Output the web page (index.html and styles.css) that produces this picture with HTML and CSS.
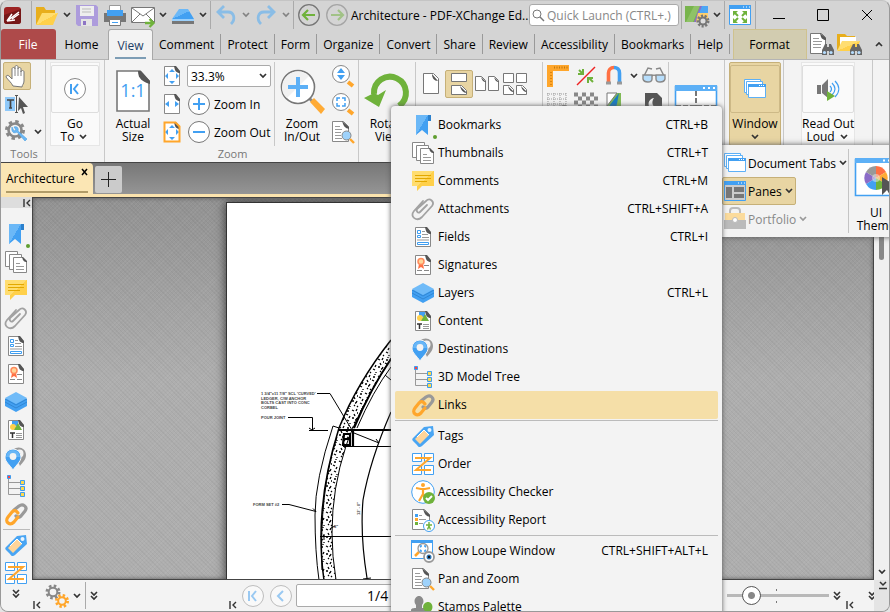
FILE: index.html
```
<!DOCTYPE html>
<html lang="en">
<head>
    <meta charset="UTF-8">
    <meta name="viewport" content="width=device-width, initial-scale=1.0">
    <title>Architecture - PDF-XChange Editor</title>
    <link rel="stylesheet" href="styles.css">
</head>
<body>

<!-- Icon sprite -->
<svg class="sprite" aria-hidden="true">
    <linearGradient id="blue" x1="0" y1="0" x2="1" y2="1">
        <stop offset=".5" stop-color="#6bb8f7"/><stop offset=".5" stop-color="#42a0f2"/>
    </linearGradient>
    <linearGradient id="yellow" x1="0" y1="0" x2="1" y2="1">
        <stop offset=".5" stop-color="#ffdd70"/><stop offset=".5" stop-color="#ffd04a"/>
    </linearGradient>

    <!-- small marks -->
    <symbol id="chev" viewBox="0 0 12 12"><path d="M3 4l3 3 3-3" fill="none" stroke="currentColor" stroke-width="1.700"/></symbol>
    <symbol id="chev2" viewBox="0 0 12 12"><path d="M3 2l3 3 3-3M3 6l3 3 3-3" fill="none" stroke="currentColor" stroke-width="1.600"/></symbol>
    <symbol id="tostart" viewBox="0 0 8 8"><path d="M1 0v8M7 1L4 4l3 3" fill="none" stroke="#333" stroke-width="1.400"/></symbol>

    <!-- documents -->
    <symbol id="doc" viewBox="0 0 24 24"><path d="M4.500 2.500h11l4 5v14h-15z" fill="#fff" stroke="#888"/><path d="M14 2h2l4 5v2c-4 0-5-2-6-7z" fill="#555"/></symbol>
    <symbol id="bookmark" viewBox="0 0 24 24"><path d="M16 2h4v6h-3z" fill="#2b80cc"/><path d="M5 2h12v20l-6-5-6 5z" fill="url(#blue)"/><circle cx="24" cy="24" r="2" fill="#5f9e2f"/></symbol>
    <symbol id="thumbs" viewBox="0 0 24 24"><g fill="#fff" stroke="#888"><path d="M1.500 1.500h12v15h-12z"/><path d="M5.500 4.500h12v15h-12z"/><path d="M9.500 7.500h9l4 4v11h-13z"/></g><path d="M18 7h1l4 4v1c-3 0-4-1-5-5z" fill="#555"/><path d="M12 13.500h4M12 16.500h8M12 19.500h8" stroke="#999"/></symbol>
    <symbol id="comment" viewBox="0 0 24 24"><path d="M1 2h22v15H11l-5 5v-5H1z" fill="url(#yellow)"/><path d="M4 6.500h16M4 9.500h16M4 12.500h12" stroke="#e2a800"/></symbol>
    <symbol id="clip" viewBox="0 0 24 24"><path d="M16 8l-7 7c-2 2-4-1-3-3l9-8c4-4 9 1 6 5L11 20c-5 5-13 0-8-6l9-10" fill="none" stroke="#a2a2a2" stroke-width="1.800" stroke-linecap="round"/></symbol>
    <symbol id="fields" viewBox="0 0 24 24"><use href="#doc"/><path d="M6.500 5.500h3v3h-3zM6.500 10.500h3v2h-3zM6.500 17.500h11v2h-11z" fill="none" stroke="#3d9df0"/><path d="M11 6.500h3M11 9.500h6M11 12.500h7M6 15h12" stroke="#999"/></symbol>
    <symbol id="signature" viewBox="0 0 24 24"><use href="#doc"/><path d="M8 11l-1 5 3-2 3 2-1-5z" fill="#ff7043"/><circle cx="10" cy="8.500" r="3" fill="#ffd699" stroke="#ff8a5c" stroke-width="1.500"/><path d="M13 12.500h5M6 17.500h5M13 17.500h5" stroke="#888"/></symbol>
    <symbol id="layers" viewBox="0 0 24 24"><path d="M1 9l11-6 11 6v7l-11 6-11-6z" fill="#42a0f2"/><path d="M1 8l11-6 11 6-11 6z" fill="#70bbf8"/><path d="M1 12l11 6 11-6M1 9l11 6 11-6" fill="none" stroke="#3187d4"/></symbol>
    <symbol id="content" viewBox="0 0 24 24"><use href="#doc"/><path d="M8 3h6v5H8z" fill="#42a0f2"/><circle cx="9" cy="9" r="3" fill="#ffd04a"/><path d="M10 12l4-7 4 7z" fill="#6fb23b"/><path d="M6 15h5M8.500 15v5" stroke="#333" stroke-width="1.500"/><path d="M12 15.500h6M12 17.500h6M12 19.500h6" stroke="#999"/></symbol>
    <symbol id="pin" viewBox="0 0 24 24"><path d="M9 4c5-5 13-2 13 5 0 5-4 8-6 11z" fill="#999"/><circle cx="15.500" cy="7.500" r="4" fill="#f3f3f3"/><path d="M9 24C6 19 1 16 1 11a8 8 0 0 1 16 0c0 5-5 8-8 13z" fill="#42a0f2" stroke="#f3f3f3"/><path d="M2 11a7 7 0 0 1 14 0z" fill="#68b6f6"/><circle cx="9" cy="10.500" r="3.400" fill="#f3f3f3"/></symbol>
    <symbol id="tree" viewBox="0 0 24 24"><path d="M4.500 5v15.500H17M5 8.500h12M5 14.500h12" fill="none" stroke="#999"/><path d="M3.500 1.500h3v3h-3z" fill="#f44" stroke="#3d9df0"/><path d="M16.500 6.500h4v4h-4zM16.500 12.500h4v4h-4zM16.500 18.500h4v4h-4z" fill="#ffd84a" stroke="#3d9df0"/></symbol>
    <symbol id="link" viewBox="0 0 24 24"><g fill="none" stroke-width="3.200" stroke-linecap="round"><path d="M10 8l5-4c4-3 9 1 6 5l-4 5c-2 2-4 1-5 0" stroke="#999"/><path d="M14 11c-2-3-4-3-6-1l-4 5c-4 5 2 9 6 5l4-5" stroke="#ffa62b"/></g></symbol>
    <symbol id="tag" viewBox="0 0 24 24"><path d="M13 3l9-1 1 9L11 22c-2 2-4 1-5-1l-4-4c-1-1-1-2 0-3z" fill="#49a5f3"/><path d="M13 6l5 5-9 9-5-5z" fill="#ffd59a"/><path d="M6 13l7-7 5 5" fill="none" stroke="#fff"/><circle cx="18.500" cy="6" r="2" fill="#e9f5ff"/></symbol>
    <symbol id="order" viewBox="0 0 24 24"><path d="M1.500 1.500h9v8h-9zM13.500 1.500h9v8h-9zM1.500 13.500h9v9h-9zM13.500 13.500h9v9h-9z" fill="#fff" stroke="#42a0f2"/><path d="M4 6h15L5 18h15" fill="none" stroke="#ffa62b" stroke-width="2"/></symbol>
    <symbol id="a11y" viewBox="0 0 24 24"><circle cx="12" cy="12" r="11.300" fill="#fff" stroke="#42a0f2"/><circle cx="12" cy="5" r="2" fill="#ffa62b"/><path d="M5 8l5 1h4l5-1M12 9v5l-4 7M12 14l4 7" fill="none" stroke="#ffa62b" stroke-width="2.200"/><circle cx="18" cy="18" r="6" fill="#6fb23b"/><path d="M15 18l2 2 4-4" fill="none" stroke="#fff" stroke-width="2"/></symbol>
    <symbol id="report" viewBox="0 0 24 24"><path d="M1.500 1.500h12l5 5v15h-17z" fill="#fff" stroke="#888"/><path d="M12 1l7 6v2c-4-1-5-2-7-8z" fill="#555"/><path d="M8 7.500h3M8 11.500h7M8 15.500h4" stroke="#999"/><path d="M4 6h3v3H4z" fill="#42a0f2"/><path d="M4 10h3v3H4z" fill="#ffa62b"/><path d="M4 14h3v3H4z" fill="#6fb23b"/><circle cx="18" cy="18" r="5.500" fill="#fff" stroke="#42a0f2"/><path d="M15 17h6M18 14v4l-1.500 3.500M18 18l1.500 3.500" stroke="#6fb23b" stroke-width="1.400" fill="none"/></symbol>
    <symbol id="loupe" viewBox="0 0 24 24"><path d="M.5 1.500h21v18H.5z" fill="#fff" stroke="#42a0f2"/><path d="M0 1h22v3H0z" fill="#42a0f2"/><path d="M4 17l4-4" stroke="#ffa62b" stroke-width="2.500"/><circle cx="12" cy="9.500" r="5" fill="#fff" stroke="#999" stroke-width="1.300"/><path d="M9.500 8.500V7H11M13 7h1.500v1.500M14.500 10.500V12H13M11 12H9.500v-1.500" fill="none" stroke="#42a0f2" stroke-width="1.300"/><circle cx="18" cy="18" r="5" fill="#fff" stroke="#999" stroke-width="1.800"/><circle cx="18" cy="18" r="2.500" fill="#2d77b8"/><circle cx="18" cy="18" r="1.200" fill="#111"/></symbol>
    <symbol id="panzoom" viewBox="0 0 24 24"><path d="M1.500 1.500h11l5 5v15h-16z" fill="#fff" stroke="#888"/><path d="M11 1l7 6v2c-4-1-5-2-7-8z" fill="#555"/><path d="M4 6.500h5M4 9.500h7M4 12.500h6M4 15.500h6M4 18.500h7" stroke="#999"/><path d="M19 19l4 4" stroke="#ffa62b" stroke-width="2.400"/><circle cx="15.500" cy="15.500" r="4.500" fill="#9ed2fb" stroke="#888"/></symbol>
    <symbol id="stamps" viewBox="0 0 24 24"><path d="M5 10c-3-3-1-9 3-9s6 6 3 9v3h8v7H0v-5c0-1 1-2 5-2z" fill="#8a8a8a"/><path d="M14 16c-4-4-1-9 3-9s6 5 3 9v3h4v5H11v-4h3z" fill="#6fb23b"/></symbol>

    <!-- title bar -->
    <symbol id="logo" viewBox="0 0 24 24"><rect x="0" y="4" width="17" height="17" rx="3" fill="#9c2323"/><path d="M0 12l17-6v12c0 2-1 3-3 3H3c-2 0-3-1-3-3z" fill="#761717"/><path d="M3 18l5-7M3 18l8-1M3 18L15 9M8 16l7-5" stroke="#fff" stroke-width="1.500" fill="none"/></symbol>
    <symbol id="folder" viewBox="0 0 24 24"><path d="M1 22V4h8l2 3h9v5l-6 10z" fill="#e8ae1c"/><path d="M1 22L7 10h16l-5 12z" fill="url(#yellow)"/></symbol>
    <symbol id="save" viewBox="0 0 24 24"><path d="M1 2h20l2 2v19H3l-2-2z" fill="#ad9cdc"/><path d="M5 3h14v10H5z" fill="#eee"/><path d="M7 6h9M7 9h9" stroke="#bbb"/><path d="M6 16h11v7H6z" fill="#e4e4e4"/><path d="M8 18h3v4H8z" fill="#8d75c4"/></symbol>
    <symbol id="printer" viewBox="0 0 24 24"><path d="M1 10h22v9H1z" fill="#777"/><path d="M6.500 2.500h11v6h-11z" fill="#fff" stroke="#999"/><path d="M4 7h16v6H4z" fill="#42a0f2"/><path d="M6.500 16.500h11v6h-11z" fill="#fff" stroke="#777"/><path d="M9 19.500h6" stroke="#42a0f2"/></symbol>
    <symbol id="mail" viewBox="0 0 24 24"><path d="M.5 4.500h23v15H.5z" fill="#fff" stroke="#777"/><path d="M1 5l11 8 11-8M1 19l8-8M23 19l-8-8" fill="none" stroke="#777"/><path d="M14 20h8M18.500 16l4 4-4 4" fill="none" stroke="#6fb23b" stroke-width="2.300"/></symbol>
    <symbol id="scan" viewBox="0 0 24 24"><path d="M1 16L8 6h9l6 10z" fill="url(#blue)"/><path d="M1 16h22v2H1z" fill="#9bd0fb"/><path d="M1 18h22v3H1z" fill="#777"/></symbol>
    <symbol id="undo" viewBox="0 0 24 24"><path d="M10 3L4 9l6 6M4 9h10c6 0 8 7 3 12" fill="none" stroke="#8abde6" stroke-width="2.800"/></symbol>
    <symbol id="back" viewBox="0 0 24 24"><circle cx="12" cy="12" r="10.300" fill="none" stroke="#777" stroke-width="1.300"/><path d="M6 12h12M11 7l-5 5 5 5" fill="none" stroke="#6fb23b" stroke-width="2.200"/></symbol>
    <symbol id="search" viewBox="0 0 12 12"><circle cx="5" cy="5" r="4" fill="none" stroke="#777"/><path d="M8 8l4 4" stroke="#777" stroke-width="1.500"/></symbol>
    <symbol id="uiopts" viewBox="0 0 24 24"><path d="M0 3h23v16H0z" fill="#78b44d"/><path d="M9 3h6L8 19H1z" fill="#8fc267"/><path d="M15 3h4l-3 16h-7z" fill="#8b6cc8"/><path d="M17 3h6v7h-9z" fill="#4da6f4"/><path d="M13 10h10v9H11z" fill="#ffcf6b"/><circle cx="18" cy="18" r="5" fill="none" stroke="#777" stroke-width="3" stroke-dasharray="2 1.500"/><circle cx="18" cy="18" r="3.500" fill="#ddd" stroke="#777" stroke-width="2"/></symbol>
    <symbol id="fullscreen" viewBox="0 0 24 24"><path d="M1.500 2.500h21v19h-21z" fill="#fff" stroke="#42a0f2"/><path d="M1 2h22v4H1z" fill="#42a0f2"/><path d="M15 4h1M18 4h1M21 4h1" stroke="#fff"/><path d="M5 8h5l-5 5zM14 8h5v5zM5 15v5h5zM19 15v5h-5z" fill="#6fb23b"/><path d="M6 9l4 4M18 9l-4 4M6 19l4-4M18 19l-4-4" stroke="#6fb23b" stroke-width="2"/></symbol>
    <symbol id="binoc" viewBox="0 0 24 24"><path d="M13 23v-5l3-6h2v3h2v-3h2l3 6v5h-5v-4h-2v4z" fill="#666"/><circle cx="15.500" cy="20.500" r="1.600" fill="#b5ddff"/><circle cx="22" cy="20.500" r="1.600" fill="#b5ddff"/></symbol>
    <symbol id="finddoc" viewBox="0 0 24 24"><path d="M1.500 1.500h11l4 4v16h-15z" fill="#fff" stroke="#777"/><path d="M11 1l6 5v2c-4 0-5-2-6-7z" fill="#555"/><path d="M4 6.500h6M4 9.500h9M4 12.500h8M4 15.500h8" stroke="#999"/><use href="#binoc"/></symbol>
    <symbol id="findfolder" viewBox="0 0 24 24"><path d="M0 18V2h8l2 2h8v4z" fill="#e8ae1c"/><path d="M3 5h16v8H3z" fill="#fff"/><path d="M0 19l5-10h18l-4 10z" fill="url(#yellow)"/><use href="#binoc"/></symbol>

    <!-- ribbon -->
    <symbol id="hand" viewBox="0 0 24 24"><path d="M8 22C6 18 3 16 1 13c0-2 2-2 3-1l3 3V5c0-2 3-2 3 0V3c0-2 3-2 3 0v2c0-2 3-2 3 0v3c0-2 3-2 3 0v9c0 3-2 4-2 6z" fill="#fff" stroke="#777"/><path d="M10 5v7M13 5v7M16 7v5" stroke="#888"/></symbol>
    <symbol id="seltext" viewBox="0 0 24 24"><path d="M0 5h10v14H0z" fill="#8fc9fa"/><path d="M2 8h7M5.500 8v8M4 16h3" stroke="#444" stroke-width="1.700"/><path d="M11.500 4v16M10 3.500h3M10 20.500h3" stroke="#555"/><path d="M14 5l9 10h-5l2 6-2 1-2-6-3 3z" fill="#555"/></symbol>
    <symbol id="geartool" viewBox="0 0 24 24"><circle cx="10" cy="10" r="8.500" fill="none" stroke="#888" stroke-width="3" stroke-dasharray="3.400 3.270"/><circle cx="10" cy="10" r="6.500" fill="none" stroke="#888" stroke-width="2.600"/><path d="M7 7c-1 5 2 7 5 5l8 9 2-2-9-8c1-3-1-5-4-4l2 3-2 1z" fill="#6bb8f7" stroke="#4a9fe0" stroke-width=".6"/></symbol>
    <symbol id="first" viewBox="0 0 24 24"><circle cx="12" cy="12" r="10.500" fill="#fff" stroke="#888"/><path d="M8 7v10M15 7l-4 5 4 5" fill="none" stroke="#42a0f2" stroke-width="2"/></symbol>
    <symbol id="prev" viewBox="0 0 24 24"><circle cx="12" cy="12" r="10.500" fill="#fff" stroke="#888"/><path d="M14 7l-5 5 5 5" fill="none" stroke="#42a0f2" stroke-width="2"/></symbol>
    <symbol id="actual" viewBox="0 0 44 44"><path d="M6 2h23l9 10v30H6z" fill="#fff" stroke="#777" stroke-width="1.600"/><path d="M27 2h3l9 10v3c-7-2-12-5-12-13z" fill="#555"/></symbol>
    <symbol id="fitpage" viewBox="0 0 24 24"><use href="#doc"/><path d="M12 5l3 3H9zM12 20l3-3H9zM5 12l3-3v6zM19 12l-3-3v6z" fill="#42a0f2"/></symbol>
    <symbol id="fitwidth" viewBox="0 0 24 24"><use href="#doc"/><path d="M5 12l4-3v6zM19 12l-4-3v6z" fill="#42a0f2"/></symbol>
    <symbol id="fitvisible" viewBox="0 0 24 24"><use href="#fitpage"/><path d="M4.500 2.500h11l4 4v15h-15z" fill="none" stroke="#ffa62b" stroke-width="2"/></symbol>
    <symbol id="plus" viewBox="0 0 24 24"><circle cx="12" cy="12" r="10.500" fill="#fff" stroke="#777"/><path d="M6 12h12M12 6v12" stroke="#42a0f2" stroke-width="2"/></symbol>
    <symbol id="minus" viewBox="0 0 24 24"><circle cx="12" cy="12" r="10.500" fill="#fff" stroke="#777"/><path d="M6 12h12" stroke="#42a0f2" stroke-width="2"/></symbol>
    <symbol id="zoombig" viewBox="0 0 44 44"><path d="M28 28l4 4" stroke="#888" stroke-width="3"/><path d="M30 33l4-4 11 11-4 5z" fill="#ffab35"/><circle cx="18" cy="18" r="16.500" fill="#fff" stroke="#777" stroke-width="1.600"/><path d="M2 18a16 16 0 0 1 27-11L7 29c-4-3-5-7-5-11z" fill="#f1f1f1"/><path d="M8 18h20M18 8v20" stroke="#5db0f6" stroke-width="4"/></symbol>
    <symbol id="zoomupdown" viewBox="0 0 24 24"><path d="M17 18l5 4" stroke="#ffa62b" stroke-width="4"/><circle cx="10" cy="10" r="8.500" fill="#fff" stroke="#888"/><path d="M10 4l4 5H6zM10 16l4-5H6z" fill="#42a0f2"/></symbol>
    <symbol id="zoombox" viewBox="0 0 24 24"><path d="M17 18l5 4" stroke="#ffa62b" stroke-width="4"/><circle cx="10" cy="10" r="8.500" fill="#fff" stroke="#888"/><path d="M6 9V6h3M11 6h3v3M14 11v3h-3M9 14H6v-3" fill="none" stroke="#42a0f2" stroke-width="1.500"/></symbol>
    <symbol id="rotate" viewBox="0 0 44 44"><path d="M8 25a16 16 0 1 1 25 12" fill="none" stroke="#6fb23b" stroke-width="6"/><path d="M-2 29l15 9 7-17-8 5-4-2z" fill="#6fb23b"/></symbol>
    <symbol id="onepage" viewBox="0 0 24 24"><path d="M4.500 1.500h10l5 5v15h-15z" fill="#fff" stroke="#777"/><path d="M13 2l6 7c-4 0-6-3-6-7z" fill="#555"/></symbol>
    <symbol id="scrollpage" viewBox="0 0 24 24"><path d="M4.500 1.500h15v8h-15zM4.500 13.500h10l5 5v4h-15z" fill="#fff" stroke="#777"/><path d="M13 14l7 7c-4 0-6-3-7-7z" fill="#555"/></symbol>
    <symbol id="twopage" viewBox="0 0 24 24"><path d="M.5 4.500h6l4 4v10H.5zM13.500 4.500h6l4 4v10h-10z" fill="#fff" stroke="#777"/><path d="M6 5l5 5c-3 0-4-2-5-5zM19 5l5 5c-3 0-4-2-5-5z" fill="#555"/></symbol>
    <symbol id="fourpage" viewBox="0 0 24 24"><path d="M.5 1.500h10v9H.5zM13.500 1.500h10v9h-10zM.5 13.500h6l4 4v5H.5zM13.500 13.500h6l4 4v5h-10z" fill="#fff" stroke="#777"/><path d="M5 14l6 6c-3 0-5-2-6-6zM18 14l6 6c-3 0-5-2-6-6z" fill="#555"/></symbol>
    <symbol id="ruler" viewBox="0 0 24 24"><path d="M1 1h22v6H7v16H1z" fill="#ffa62b"/><path d="M8 3.500h14" stroke="#c07a10" stroke-width="2" stroke-dasharray="1 1.500"/><path d="M5 8v14" stroke="#d98611" stroke-width="2" stroke-dasharray="1 2"/></symbol>
    <symbol id="snapline" viewBox="0 0 24 24"><path d="M3 21L21 3" stroke="#e22" stroke-width="1.400"/><path d="M5 6l4 4M9 5v5H4M19 18l-4-4M14 19v-5h5" fill="none" stroke="#6fb23b" stroke-width="2"/></symbol>
    <symbol id="magnet" viewBox="0 0 24 24"><path d="M6.500 19V9c0-3 2-5.500 5.500-5.500" fill="none" stroke="#ff7043" stroke-width="3.600"/><path d="M12 3.500c3 0 5.500 2 5.500 5.500v10" fill="none" stroke="#42a0f2" stroke-width="3.600"/><path d="M4 19h5M15 19h5" stroke="#999" stroke-width="3"/></symbol>
    <symbol id="glasses" viewBox="0 0 24 24"><path d="M2 12L6 4l4 1M22 12l-4-8-4 1M10 12c1-1 3-1 4 0" fill="none" stroke="#888" stroke-width="1.500"/><path d="M1 11h9v4c0 4-8 4-9 0zM14 11h9v4c-1 4-9 4-9 0z" fill="#b7defc" stroke="#888" stroke-width="1.400"/></symbol>
    <symbol id="gridsnap" viewBox="0 0 24 24"><path d="M1 2h20M1 7h20M1 12h20M1 17h20" stroke="#999" stroke-dasharray="1 1"/><path d="M2 1v18M8 1v18M14 1v18M20 1v18" stroke="#999" stroke-dasharray="1 1"/><circle cx="18" cy="18" r="4" fill="#eee" stroke="#888" stroke-width="2"/></symbol>
    <symbol id="checker" viewBox="0 0 24 24"><path d="M0 2.500h24M0 10.500h24M0 18.500h24" stroke="#888" stroke-width="4" stroke-dasharray="4 4"/><path d="M4 6.500h20M4 14.500h20" stroke="#888" stroke-width="4" stroke-dasharray="4 4"/></symbol>
    <symbol id="colors" viewBox="0 0 24 24"><path d="M5 1h14v20H5z" fill="#7fb955"/><path d="M5 1h10L5 14z" fill="#fff" stroke="#777"/><path d="M17 1L1 22h12z" fill="#1a7cc4"/></symbol>
    <symbol id="night" viewBox="0 0 24 24"><path d="M3 1h12l5 5v17H3z" fill="#555"/><path d="M12 6a6 6 0 1 0 5 10c-7 0-8-6-5-10z" fill="#eee"/></symbol>
    <symbol id="split" viewBox="0 0 44 44"><path d="M1.500 4.500h41v36h-41z" fill="#fff" stroke="#42a0f2" stroke-width="1.600"/><path d="M1 3h42v6H1z" fill="#5db0f6"/><path d="M29 6h2M34 6h2M39 6h2" stroke="#fff" stroke-width="2"/><path d="M2 24h40M22 9v31" stroke="#555" stroke-width="1.600" stroke-dasharray="5 2"/></symbol>
    <symbol id="windows" viewBox="0 0 24 24"><g fill="#fff" stroke="#5db0f6"><path d="M1.500 2.500h16v13h-16z"/><path d="M3.500 4.500h16v13h-16z"/><path d="M5.500 7.500h17v13h-17z"/></g><path d="M5 7h18v3H5z" fill="#42a0f2"/><path d="M16 8.500h1M18 8.500h1M20 8.500h1" stroke="#fff"/></symbol>
    <symbol id="panes" viewBox="0 0 24 24"><path d="M1.500 3.500h21v18h-21z" fill="#ccc" stroke="#42a0f2"/><path d="M1 2h22v4H1z" fill="#42a0f2"/><path d="M15 4h1M18 4h1M21 4h1" stroke="#fff"/><path d="M3 8h6v11H3zM11 8h10v5H11zM11 15h10v4H11z" fill="#777"/></symbol>
    <symbol id="portfolio" viewBox="0 0 24 24"><path d="M7 7V4c0-2 1-3 3-3h4c2 0 3 1 3 3v3" fill="none" stroke="#bbb" stroke-width="2"/><path d="M2 6h20v8H2z" fill="#fbdb9c"/><path d="M1 13h22v9H1z" fill="#bbb"/><circle cx="12" cy="13" r="2.500" fill="#fff" stroke="#bbb"/></symbol>
    <symbol id="speaker" viewBox="0 0 24 24"><path d="M1 8h4v9H1zM6 8l6-6v19l-6-5z" fill="#777"/><path d="M14 9c2 2 2 4 0 6M16 6c4 4 4 8 0 12M19 4c5 5 5 11 0 16" fill="none" stroke="#42a0f2" stroke-width="1.200"/><path d="M11 14l8 5-8 5z" fill="#6fb23b"/></symbol>
    <symbol id="theme" viewBox="0 0 44 44"><path d="M1.500 4.500h41v36h-41z" fill="#fff" stroke="#42a0f2" stroke-width="1.600"/><path d="M1 3h42v5H1z" fill="#5db0f6"/><path d="M29 5.500h2M34 5.500h2" stroke="#fff" stroke-width="2"/><g transform="translate(22 23)"><path d="M0 0V-12A12 12 0 0 1 10-6z" fill="#ff7043"/><path d="M0 0l10-6a12 12 0 0 1 0 12z" fill="#ffab35"/><path d="M0 0l10 6A12 12 0 0 1 0 12z" fill="#6fb23b"/><path d="M0 0v12a12 12 0 0 1-10-6z" fill="#42a0f2"/><path d="M0 0l-10 6a12 12 0 0 1 0-12z" fill="#8b6cc8"/><path d="M0 0l-10-6A12 12 0 0 1 0-12z" fill="#999"/><circle r="4" fill="#eee" fill-opacity=".5"/></g><path d="M28 22v18l5-5 4 7 4-2-3-7h7z" fill="#555"/></symbol>
    <symbol id="gears" viewBox="0 0 24 24"><circle cx="8" cy="8" r="6" fill="none" stroke="#888" stroke-width="3" stroke-dasharray="2.500 2.210"/><circle cx="8" cy="8" r="4.300" fill="none" stroke="#888" stroke-width="2"/><circle cx="17" cy="17" r="5.500" fill="none" stroke="#ffa62b" stroke-width="3" stroke-dasharray="2.300 2.020"/><circle cx="17" cy="17" r="3.800" fill="none" stroke="#ffa62b" stroke-width="2"/></symbol>
</svg>

<div class="app">

    <!-- Title bar -->
    <header class="titlebar">
        <span class="tool"><svg class="icon"><use href="#logo"/></svg></span>
        <i class="sep"></i>
        <button class="tool" aria-label="Open"><svg class="icon"><use href="#folder"/></svg></button>
        <button class="drop" aria-label="Open options"><svg class="chev"><use href="#chev"/></svg></button>
        <button class="tool" aria-label="Save"><svg class="icon"><use href="#save"/></svg></button>
        <button class="tool" aria-label="Print"><svg class="icon"><use href="#printer"/></svg></button>
        <button class="tool" aria-label="Email"><svg class="icon"><use href="#mail"/></svg></button>
        <button class="drop" aria-label="Email options"><svg class="chev"><use href="#chev"/></svg></button>
        <button class="tool" aria-label="Scan"><svg class="icon"><use href="#scan"/></svg></button>
        <button class="drop" aria-label="Scan options"><svg class="chev"><use href="#chev"/></svg></button>
        <i class="sep"></i>
        <button class="tool" aria-label="Undo"><svg class="icon"><use href="#undo"/></svg></button>
        <button class="drop dim" aria-label="Undo list"><svg class="chev"><use href="#chev"/></svg></button>
        <button class="tool" aria-label="Redo"><svg class="icon flip"><use href="#undo"/></svg></button>
        <button class="drop dim" aria-label="Redo list"><svg class="chev"><use href="#chev"/></svg></button>
        <i class="sep"></i>
        <button class="tool" aria-label="Back"><svg class="icon"><use href="#back"/></svg></button>
        <button class="tool dim" aria-label="Forward"><svg class="icon flip"><use href="#back"/></svg></button>
        <span class="title">Architecture - PDF-XChange Ed..</span>
        <label class="search">
            <svg class="chev"><use href="#search"/></svg>
            <input type="text" placeholder="Quick Launch (CTRL+.)" aria-label="Quick Launch">
        </label>
        <i class="sep"></i>
        <button class="tool" aria-label="UI options"><svg class="icon"><use href="#uiopts"/></svg></button>
        <button class="drop" aria-label="More UI options"><svg class="chev"><use href="#chev"/></svg></button>
        <i class="sep"></i>
        <button class="tool" aria-label="Full screen"><svg class="icon"><use href="#fullscreen"/></svg></button>
        <i class="sep"></i>
        <button class="winbtn" aria-label="Minimize"><svg class="chev"><path d="M0 9.500h12" stroke="#000"/></svg></button>
        <button class="winbtn" aria-label="Maximize"><svg class="chev"><path d="M.5.5h11v11H.5z" fill="none" stroke="#000"/></svg></button>
        <button class="winbtn" aria-label="Close"><svg class="chev"><path d="M1 1l10 10M11 1L1 11" stroke="#000"/></svg></button>
    </header>

    <!-- Ribbon tabs -->
    <nav class="tabs">
        <button class="tab file">File</button>
        <button class="tab home">Home</button>
        <button class="tab active">View</button>
        <button class="tab line">Comment</button>
        <button class="tab line">Protect</button>
        <button class="tab line">Form</button>
        <button class="tab line">Organize</button>
        <button class="tab line">Convert</button>
        <button class="tab line">Share</button>
        <button class="tab line">Review</button>
        <button class="tab line">Accessibility</button>
        <button class="tab line">Bookmarks</button>
        <button class="tab line">Help</button>
        <button class="tab format">Format</button>
        <button class="tool" aria-label="Find"><svg class="icon"><use href="#finddoc"/></svg></button>
        <button class="tool" aria-label="Search"><svg class="icon"><use href="#findfolder"/></svg></button>
        <button class="collapse" aria-label="Collapse ribbon"><svg class="chev up"><use href="#chev"/></svg></button>
    </nav>

    <!-- Ribbon -->
    <section class="ribbon">
        <div class="group tools">
            <div class="body col">
                <button class="cell on" aria-label="Hand"><svg class="icon"><use href="#hand"/></svg></button>
                <button class="cell" aria-label="Select text"><svg class="icon"><use href="#seltext"/></svg></button>
                <button class="cell wide" aria-label="Other tools"><svg class="icon"><use href="#geartool"/></svg><svg class="chev"><use href="#chev"/></svg></button>
            </div>
            <div class="caption">Tools</div>
        </div>
        <div class="group">
            <div class="body">
                <button class="big framed"><span class="frame"><svg class="icon"><use href="#first"/></svg></span><span>Go<br>To <svg class="chev"><use href="#chev"/></svg></span></button>
            </div>
        </div>
        <div class="group zoom">
            <div class="body">
                <button class="big narrow"><span class="pic"><svg class="large"><use href="#actual"/><text x="22" y="28" class="ratio">1:1</text></svg></span><span>Actual<br>Size</span></button>
                <div class="col pages">
                    <button class="cell" aria-label="Fit page"><svg class="icon"><use href="#fitpage"/></svg></button>
                    <button class="cell" aria-label="Fit width"><svg class="icon"><use href="#fitwidth"/></svg></button>
                    <button class="cell" aria-label="Fit visible"><svg class="icon"><use href="#fitvisible"/></svg></button>
                </div>
                <div class="col level">
                    <div class="cell"><select aria-label="Zoom level"><option>33.3%</option></select><svg class="chev over"><use href="#chev"/></svg></div>
                    <button class="cell"><svg class="icon"><use href="#plus"/></svg>Zoom In</button>
                    <button class="cell"><svg class="icon"><use href="#minus"/></svg>Zoom Out</button>
                </div>
                <i class="rule"></i>
                <button class="big"><span class="pic"><svg class="large"><use href="#zoombig"/></svg></span><span>Zoom<br>In/Out</span></button>
                <div class="col">
                    <button class="cell" aria-label="Dynamic zoom"><svg class="icon"><use href="#zoomupdown"/></svg></button>
                    <button class="cell" aria-label="Loupe"><svg class="icon"><use href="#zoombox"/></svg></button>
                    <button class="cell" aria-label="Pan and zoom"><svg class="icon"><use href="#panzoom"/></svg></button>
                </div>
            </div>
            <div class="caption">Zoom</div>
        </div>
        <div class="group view">
            <div class="body">
                <button class="big"><span class="pic"><svg class="large"><use href="#rotate"/></svg></span><span>Rotate<br>View</span></button>
                <i class="rule"></i>
                <div class="layouts">
                    <button class="cell" aria-label="Single page"><svg class="icon"><use href="#onepage"/></svg></button>
                    <button class="cell on" aria-label="Continuous"><svg class="icon"><use href="#scrollpage"/></svg></button>
                    <button class="cell" aria-label="Two pages"><svg class="icon"><use href="#twopage"/></svg></button>
                    <button class="cell" aria-label="Two pages continuous"><svg class="icon"><use href="#fourpage"/></svg></button>
                </div>
                <i class="rule"></i>
                <div class="measure">
                    <button class="cell" aria-label="Rulers"><svg class="icon"><use href="#ruler"/></svg></button>
                    <button class="cell" aria-label="Line weights"><svg class="icon"><use href="#snapline"/></svg></button>
                    <button class="cell" aria-label="Snap"><svg class="icon"><use href="#magnet"/></svg></button>
                    <button class="drop" aria-label="Snap options"><svg class="chev"><use href="#chev"/></svg></button>
                    <button class="cell" aria-label="Read mode"><svg class="icon"><use href="#glasses"/></svg></button>
                    <button class="cell" aria-label="Grid"><svg class="icon"><use href="#gridsnap"/></svg></button>
                    <button class="cell" aria-label="Transparency grid"><svg class="icon"><use href="#checker"/></svg></button>
                    <button class="cell" aria-label="Colors"><svg class="icon"><use href="#colors"/></svg></button>
                    <span></span>
                    <button class="cell" aria-label="Night mode"><svg class="icon"><use href="#night"/></svg></button>
                </div>
                <i class="rule"></i>
                <button class="big" aria-label="Split"><span class="pic"><svg class="large"><use href="#split"/></svg></span></button>
            </div>
        </div>
        <div class="group">
            <div class="body">
                <button class="big framed on"><span class="frame"><svg class="icon"><use href="#windows"/></svg></span><span>Window<br><svg class="chev"><use href="#chev"/></svg></span></button>
            </div>
        </div>
        <div class="group read">
            <div class="body">
                <button class="big framed"><span class="frame"><svg class="icon"><use href="#speaker"/></svg></span><span>Read Out<br>Loud <svg class="chev"><use href="#chev"/></svg></span></button>
            </div>
        </div>
    </section>

    <!-- Document tabs -->
    <div class="doctabs">
        <div class="doctab"><span>Architecture</span><button aria-label="Close tab"><svg class="x"><path d="M1 1l5 6M6 1L1 7" stroke="#000" stroke-width="1.500"/></svg></button></div>
        <button class="newtab" aria-label="New tab"><svg class="x16"><path d="M7.500 0v15M0 7.500h15" stroke="#222"/></svg></button>
    </div>

    <main class="main">
        <aside class="side">
            <div class="sidehead"><svg class="mark"><use href="#tostart"/></svg></div>
            <div class="grip"></div>
            <button aria-label="Bookmarks"><svg class="icon"><use href="#bookmark"/></svg></button>
            <button aria-label="Thumbnails"><svg class="icon"><use href="#thumbs"/></svg></button>
            <button aria-label="Comments"><svg class="icon"><use href="#comment"/></svg></button>
            <button aria-label="Attachments"><svg class="icon"><use href="#clip"/></svg></button>
            <button aria-label="Fields"><svg class="icon"><use href="#fields"/></svg></button>
            <button aria-label="Signatures"><svg class="icon"><use href="#signature"/></svg></button>
            <button aria-label="Layers"><svg class="icon"><use href="#layers"/></svg></button>
            <button aria-label="Content"><svg class="icon"><use href="#content"/></svg></button>
            <button aria-label="Destinations"><svg class="icon"><use href="#pin"/></svg></button>
            <button aria-label="3D Model Tree"><svg class="icon"><use href="#tree"/></svg></button>
            <button aria-label="Links"><svg class="icon"><use href="#link"/></svg></button>
            <hr>
            <button aria-label="Tags"><svg class="icon"><use href="#tag"/></svg></button>
            <button aria-label="Order"><svg class="icon"><use href="#order"/></svg></button>
            <button class="more" aria-label="More panes"><svg class="chev"><use href="#chev2"/></svg></button>
        </aside>

        <div class="center">
            <div class="workspace">
                <div class="sheet">
                    <svg class="drawing" viewBox="227 203 452 378" preserveAspectRatio="xMinYMin">
                        <defs>
                            <pattern id="concrete" width="13" height="17" patternUnits="userSpaceOnUse">
                                <path d="M1 2l2 1M6 1l-1 2M9 3h2M3 6l1 2M8 6l2 1M12 8l-1 2M1 10h2M6 10l-1 2M9 12l2 1M3 14l1 1M7 15l-1 1M12 15v1M6 5h1M4 12h1M11 0v1" stroke="#000" stroke-width="1.300"/>
                            </pattern>
                        </defs>
                        <path d="M391 340Q357 383 339 428Q321 485 321 537Q321 560 324 580H336Q332 556 332 533Q332 488 346 446Q356 415 391 358z" fill="url(#concrete)"/>
                        <g fill="none" stroke="#000">
                            <path d="M391 340Q357 383 339 428Q321 485 321 537Q321 560 324 580" stroke-width="1.500"/>
                            <path d="M391 358Q356 415 346 446Q332 488 332 533Q332 556 336 580"/>
                            <path d="M391 359Q371 388 354 428" stroke-width="2"/>
                            <path d="M391 367Q373 391 357 428"/>
                            <path d="M339 428L333 426Q315 480 315 515Q315 552 319 580"/>
                            <path d="M337 437Q319 492 322 570"/>
                            <path d="M391 412Q370 460 363 500Q360 535 367 578" stroke-width="1.200"/>
                            <path d="M339 430H391" stroke-width="2"/>
                            <path d="M343 446.500H391M320 536.500H391M309 430.500H328"/>
                            <path d="M317 393.500H330L352 430M288 417.500H312.500V430M309 428l3 2 3-2M354 433l25 10-3-4M282 504.500h7l27 7-3-3"/>
                            <path d="M344 434h6v11h-7zM343 439h7M353 430v16" stroke-width="2.200"/>
                            <path d="M363 579l8-1M324 534v6M331 528l4-2"/>
                            <path d="M385 375l6 5"/>
                        </g>
                        <g class="note">
                            <text x="261" y="395">1 3/4"x11 7/8" SCL 'CURVED'</text>
                            <text x="261" y="400">LEDGER, C/W ANCHOR</text>
                            <text x="261" y="404">BOLTS CAST INTO CONC</text>
                            <text x="261" y="409">CORBEL</text>
                            <text x="261" y="419">POUR JOINT</text>
                            <text x="253" y="506">FORM SET #2</text>
                            <text x="334" y="528">8"</text>
                            <text transform="translate(360 515) rotate(-90)">12' - 0"</text>
                        </g>
                        <path d="M253 579.500h24" stroke="#444" stroke-dasharray="3 1"/>
                    </svg>
                </div>
            </div>
            <div class="scroll"><span class="thumb"></span><svg class="chev"><use href="#chev"/></svg></div>

            <footer class="status">
                <div class="options">
                    <div class="handle"><span class="grip"></span><svg class="mark"><use href="#tostart"/></svg></div>
                    <button aria-label="Options"><svg class="icon"><use href="#gears"/></svg></button>
                    <button class="drop" aria-label="Options menu"><svg class="chev"><use href="#chev"/></svg></button>
                    <i class="sep"></i>
                    <button class="drop" aria-label="More"><svg class="chev"><use href="#chev2"/></svg></button>
                </div>
                <div class="handle"><span class="grip"></span><svg class="mark"><use href="#tostart"/></svg></div>
                <button class="tool dim" aria-label="First page"><svg class="icon"><use href="#first"/></svg></button>
                <button class="tool dim" aria-label="Previous page"><svg class="icon"><use href="#prev"/></svg></button>
                <label class="pageno"><input type="text" value="1" aria-label="Page"><span>/4</span></label>
                <div class="zoomer">
                    <button class="tool" aria-label="Zoom out"><svg class="icon"><use href="#minus"/></svg></button>
                    <input type="range" min="0" max="100" value="18" aria-label="Zoom">
                    <svg class="chev"><use href="#chev2"/></svg>
                    <div class="handle"><span class="grip"></span><svg class="mark"><use href="#tostart"/></svg></div>
                    <svg class="chev last"><use href="#chev2"/></svg>
                </div>
            </footer>
            <div class="corner"><svg class="chev"><path d="M3 1l3 3 3-3M2 7.500h8" fill="none" stroke="#333" stroke-width="1.500"/></svg></div>
        </div>
    </main>

    <!-- Window flyout -->
    <section class="flyout">
        <div class="items">
            <button><svg class="icon"><use href="#windows"/></svg>Document Tabs <svg class="chev"><use href="#chev"/></svg></button>
            <button class="on"><svg class="icon"><use href="#panes"/></svg>Panes <svg class="chev"><use href="#chev"/></svg></button>
            <button class="off" disabled><svg class="icon"><use href="#portfolio"/></svg>Portfolio <svg class="chev"><use href="#chev"/></svg></button>
        </div>
        <button class="big theme"><span class="pic"><svg class="large"><use href="#theme"/></svg></span><span>UI<br>Theme</span></button>
    </section>

    <!-- Panes menu -->
    <div class="menu" role="menu">
        <button role="menuitem"><svg class="icon"><use href="#bookmark"/></svg><span>Bookmarks</span><kbd>CTRL+B</kbd></button>
        <button role="menuitem"><svg class="icon"><use href="#thumbs"/></svg><span>Thumbnails</span><kbd>CTRL+T</kbd></button>
        <button role="menuitem"><svg class="icon"><use href="#comment"/></svg><span>Comments</span><kbd>CTRL+M</kbd></button>
        <button role="menuitem"><svg class="icon"><use href="#clip"/></svg><span>Attachments</span><kbd>CTRL+SHIFT+A</kbd></button>
        <button role="menuitem"><svg class="icon"><use href="#fields"/></svg><span>Fields</span><kbd>CTRL+I</kbd></button>
        <button role="menuitem"><svg class="icon"><use href="#signature"/></svg><span>Signatures</span></button>
        <button role="menuitem"><svg class="icon"><use href="#layers"/></svg><span>Layers</span><kbd>CTRL+L</kbd></button>
        <button role="menuitem"><svg class="icon"><use href="#content"/></svg><span>Content</span></button>
        <button role="menuitem"><svg class="icon"><use href="#pin"/></svg><span>Destinations</span></button>
        <button role="menuitem"><svg class="icon"><use href="#tree"/></svg><span>3D Model Tree</span></button>
        <button role="menuitem" class="hot"><svg class="icon"><use href="#link"/></svg><span>Links</span></button>
        <hr>
        <button role="menuitem"><svg class="icon"><use href="#tag"/></svg><span>Tags</span></button>
        <button role="menuitem"><svg class="icon"><use href="#order"/></svg><span>Order</span></button>
        <button role="menuitem"><svg class="icon"><use href="#a11y"/></svg><span>Accessibility Checker</span></button>
        <button role="menuitem"><svg class="icon"><use href="#report"/></svg><span>Accessibility Report</span></button>
        <hr>
        <button role="menuitem"><svg class="icon"><use href="#loupe"/></svg><span>Show Loupe Window</span><kbd>CTRL+SHIFT+ALT+L</kbd></button>
        <button role="menuitem"><svg class="icon"><use href="#panzoom"/></svg><span>Pan and Zoom</span></button>
        <button role="menuitem"><svg class="icon"><use href="#stamps"/></svg><span>Stamps Palette</span></button>
    </div>
</div>

</body>
</html>
```
FILE: styles.css
```
* {
    box-sizing: border-box;
}

body {
    margin: 0;
    background: #e4e4e4;
    font-family: "Open Sans", "Noto Sans", sans-serif;
    font-size: 11px;
    color: #000;
}

button, input, select, kbd {
    font: inherit;
    color: inherit;
}

button {
    background: none;
    border: 0;
    padding: 0;
    white-space: nowrap;
}

svg {
    display: block;
    flex: none;
    overflow: visible;
}

symbol {
    overflow: visible;
}

/* Icons */
.sprite {
    position: absolute;
    width: 0;
    height: 0;
}

.icon {
    width: 24px;
    height: 24px;
}

.large {
    width: 44px;
    height: 44px;
}

.chev {
    width: 12px;
    height: 12px;
    color: #333;
}

.mark {
    width: 8px;
    height: 8px;
}

.flip {
    transform: scaleX(-1);
}

.up {
    transform: scaleY(-1);
}

.dim {
    opacity: 0.5;
}

.on {
    background: #e8d5a3;
    border: 1px solid #c6b078;
    border-radius: 2px;
}

/* Window */
.app {
    position: relative;
    display: flex;
    flex-direction: column;
    height: 100vh;
    overflow: hidden;
    background: #d4d4d4;
    border: 1px solid #999;
    border-top-color: #c4c4c4;
    border-radius: 8px;
}

.titlebar {
    display: flex;
    align-items: center;
    flex: 0 0 28px;
    padding-left: 1px;
}

.tool {
    display: flex;
    justify-content: center;
    flex: 0 0 28px;
}

.drop {
    flex: 0 0 12px;
}

.sep {
    flex: 0 0 1px;
    align-self: stretch;
    margin: 0 1px;
    background: #aaa;
}

.title {
    flex: 1 0 auto;
    font-size: 12px;
    white-space: nowrap;
}

.search {
    display: flex;
    align-items: center;
    gap: 3px;
    width: 150px;
    min-width: 0;
    height: 22px;
    margin-right: 1px;
    padding: 0 2px;
    background: #fff;
    border: 1px solid #aaa;
    border-radius: 3px;
}

.search input {
    width: 100%;
    min-width: 0;
    padding: 0;
    border: 0;
    outline: 0;
    background: none;
    font-size: 12px;
}

.search input::placeholder {
    color: #888;
}

.winbtn {
    display: flex;
    justify-content: center;
    flex: 0 0 44px;
}

/* Ribbon tabs */
.tabs {
    display: flex;
    align-items: stretch;
    flex: 0 0 31px;
    border-bottom: 1px solid #b4b4b4;
}

.tab {
    position: relative;
    flex: none;
    padding: 0 7px 0 6px;
    font-size: 12px;
}

.file {
    width: 55px;
    background: #ae4a4a;
    border-radius: 3px 3px 0 0;
    color: #fff;
}

.home {
    width: 52px;
}

.active {
    width: 45px;
    margin-bottom: -1px;
    background: #f3f3f3;
    border: 1px solid #a8a8a8;
    border-bottom: 0;
    border-radius: 3px 3px 0 0;
    color: #1d3e66;
    padding: 0;
}

.active::after {
    content: "";
    position: absolute;
    left: 6px;
    right: 6px;
    bottom: 1px;
    height: 2px;
    background: #7d9db5;
}

.line::after {
    content: "";
    position: absolute;
    right: 0;
    top: 5px;
    bottom: 5px;
    width: 1px;
    background: #999;
}

.format {
    width: 74px;
    margin-left: auto;
    background: #d2ccb0;
    border: 1px solid #cfc28e;
    border-bottom: 0;
}

.tabs .tool {
    align-items: center;
}

.collapse {
    flex: 0 0 26px;
    padding-left: 10px;
}

/* Ribbon */
.ribbon {
    display: flex;
    flex: 0 0 103px;
    background: #f3f3f3;
    border-bottom: 1px solid #444;
}

.group {
    display: flex;
    flex-direction: column;
    flex: none;
    padding: 2px 4px 0;
    border-right: 1px solid #c8c8c8;
}

.group.tools {
    padding: 2px 0 0 2px;
}

.body {
    display: flex;
    height: 84px;
}

.col {
    display: flex;
    flex-direction: column;
}

.cell {
    display: flex;
    align-items: center;
    justify-content: center;
    gap: 3px;
    width: 28px;
    height: 28px;
}

.cell.wide {
    width: 42px;
}

.caption {
    line-height: 16px;
    text-align: center;
    color: #777;
}

.rule {
    width: 1px;
    background: #c8c8c8;
}

.big {
    min-width: 54px;
    font-size: 12px;
    line-height: 13px;
    text-align: center;
}

.narrow {
    min-width: 50px;
}

.big .chev {
    display: inline-block;
    vertical-align: -2px;
}

.pic {
    display: flex;
    justify-content: center;
    height: 52px;
    padding-top: 4px;
}

.frame {
    display: flex;
    align-items: center;
    justify-content: center;
    height: 48px;
    margin-bottom: 4px;
    border: 1px solid #ddd;
    border-radius: 2px;
}

.framed {
    min-width: 50px;
    background: #fafafa;
    border: 1px solid #e6e6e6;
}

.framed.on {
    min-width: 52px;
    margin-right: -2px;
    background: #e8d5a3;
    border-color: #c6b078;
}

.on .frame {
    border-color: #cdb987;
}

.ratio {
    font-size: 18px;
    fill: #42a0f2;
    text-anchor: middle;
}

.level .cell {
    position: relative;
    width: 88px;
    padding-left: 1px;
    justify-content: flex-start;
    font-size: 12px;
}

.level select {
    width: 84px;
    height: 22px;
    padding: 0 3px;
    appearance: none;
    background: #fff;
    border: 1px solid #aaa;
    border-radius: 2px;
}

.over {
    position: absolute;
    right: 5px;
    pointer-events: none;
}

.zoom {
    padding: 2px 1px 0 3px;
}

.view {
    padding: 2px 1px 0 2px;
}

.layouts {
    display: flex;
    padding: 8px 0 0 1px;
}

.layouts + .rule {
    margin: 0 1px 0 13px;
}

.measure {
    display: grid;
    grid-template-columns: 28px 28px 28px 12px 28px;
    grid-auto-rows: 28px;
}

.read {
    padding: 2px 17px 0;
}

/* Document tabs */
.doctabs {
    display: flex;
    align-items: flex-start;
    gap: 2px;
    flex: 0 0 34px;
    background: linear-gradient(#777, #959595);
    border-bottom: 3px solid #fbe3ad;
}

.doctab {
    position: relative;
    display: flex;
    justify-content: space-between;
    align-items: flex-start;
    width: 92px;
    height: 31px;
    padding: 8px 4px 0 5px;
    background: #fbe6b4;
    border-radius: 0 4px 0 0;
    font-size: 12px;
    line-height: 16px;
}

.doctab::after {
    content: "";
    position: absolute;
    left: 5px;
    right: 5px;
    bottom: 1px;
    height: 2px;
    background: #b19c68;
}

.doctab button {
    margin-top: -3px;
}

.x {
    width: 8px;
    height: 8px;
}

.newtab {
    width: 27px;
    height: 27px;
    margin-top: 3px;
    padding: 6px;
    background: #cbcbcb;
    border-radius: 2px;
}

.x16 {
    width: 15px;
    height: 15px;
}

/* Side panel */
.main {
    display: flex;
    flex: 1;
    min-height: 0;
}

.side {
    flex: 0 0 31px;
    background: #f3f3f3;
}

.side button {
    display: flex;
    align-items: center;
    justify-content: center;
    width: 30px;
    height: 28px;
}

.side .more {
    height: 14px;
}

.side hr {
    height: 1px;
    margin: 1px 2px;
    border: 0;
    background: #bbb;
}

.sidehead {
    height: 11px;
    padding: 2px 0 0 22px;
    background: #ddd;
}

.grip {
    display: block;
    background-image: radial-gradient(#999 40%, transparent 41%);
    background-size: 2px 2px;
}

.side .grip {
    height: 10px;
    margin: 1px 3px;
}

/* Workspace */
.center {
    display: grid;
    grid-template-columns: 1fr 15px;
    grid-template-rows: 1fr 31px;
    flex: 1;
    min-width: 0;
}

.workspace {
    overflow: hidden;
    border: 1px solid #444;
    background:
        repeating-linear-gradient(45deg, rgba(0, 0, 0, 0.04) 0 1px, transparent 1px 3px),
        repeating-linear-gradient(-45deg, rgba(255, 255, 255, 0.05) 0 1px, transparent 1px 3px),
        linear-gradient(#929292, #aeaeae 180px);
    box-shadow: inset 0 0 4px #555;
}

.sheet {
    width: 54%;
    height: 100%;
    margin: 4px auto 0;
    background: #fff;
    border: 1px solid #333;
    box-shadow: 0 0 10px #333;
    overflow: hidden;
}

.drawing {
    width: 452px;
    height: 378px;
}

.note {
    font: bold 4px "Liberation Sans", sans-serif;
    fill: #444;
}

.scroll {
    display: flex;
    flex-direction: column;
    align-items: center;
    justify-content: space-between;
    padding-bottom: 2px;
    background: #f0f0f0;
}

.thumb {
    width: 5px;
    height: 63px;
    background: #888;
    border-radius: 3px;
}

.corner {
    padding: 1px 0 0 3px;
    background: #e4e4e4;
}

/* Status bar */
.status {
    display: flex;
    align-items: center;
    min-width: 0;
    background: #f3f3f3;
}

.options {
    display: flex;
    align-items: center;
    gap: 2px;
    flex: 0 0 196px;
    height: 100%;
}

.options .sep {
    margin: 2px 0;
}

.handle {
    display: flex;
    flex-direction: column;
    gap: 2px;
    flex: 0 0 11px;
    padding-left: 1px;
}

.handle .grip {
    width: 10px;
    height: 16px;
}

.pageno {
    display: flex;
    align-items: center;
    width: 180px;
    height: 23px;
    margin-left: 1px;
    background: #fff;
    border: 1px solid #aaa;
    border-radius: 2px;
    font-size: 14px;
}

.pageno input {
    width: 78px;
    padding: 0;
    border: 0;
    background: none;
    text-align: right;
}

.zoomer {
    display: flex;
    align-items: center;
    margin-left: auto;
}

.zoomer input {
    width: 102px;
    height: 20px;
    margin: 0 2px;
    appearance: none;
    background:
        linear-gradient(#777, #777) 49px 3px / 1px 2px no-repeat,
        linear-gradient(#777, #777) 49px 15px / 1px 2px no-repeat,
        linear-gradient(#b8b8b8, #b8b8b8) center / 100% 3px no-repeat;
}

.zoomer input::-webkit-slider-thumb {
    appearance: none;
    width: 19px;
    height: 19px;
    border: 1px solid #555;
    border-radius: 50%;
    background: radial-gradient(#888 3px, #fff 4px);
}

.zoomer .handle {
    margin: 0 10px 0 2px;
}

.last {
    margin-right: -4px;
}

/* Flyout under the Window button */
.flyout {
    position: absolute;
    top: 144px;
    left: 692px;
    right: -14px;
    display: flex;
    padding: 4px 0 4px 29px;
    background: #f3f3f3;
    box-shadow: 0 0 6px #555;
}

.items {
    display: flex;
    flex-direction: column;
    align-items: flex-start;
    flex: 1;
    min-width: 0;
    border-right: 1px solid #c4c4c4;
}

.items button {
    display: flex;
    align-items: center;
    gap: 1px;
    height: 28px;
    border: 1px solid transparent;
    font-size: 12px;
}

.items .on {
    border-color: #c6b078;
}

.items .off {
    color: #888;
}

.off .chev {
    color: #999;
}

.theme .pic {
    height: 55px;
}

/* Panes menu */
.menu {
    position: absolute;
    top: 105px;
    left: 390px;
    width: 331px;
    padding: 5px 4px;
    background: #f3f3f3;
    border-radius: 4px;
    box-shadow: 0 0 5px #555;
}

.menu button {
    display: flex;
    align-items: center;
    width: 100%;
    height: 28px;
    padding: 0 10px 0 16px;
    font-size: 12px;
    text-align: left;
}

.menu span {
    flex: 1;
    padding: 0 0 2px 3px;
}

.menu kbd {
    padding-bottom: 2px;
}

.menu .hot {
    background: #f5dfa8;
    border-radius: 2px;
}

.menu hr {
    height: 1px;
    margin: 1px 0;
    border: 0;
    background: #bbb;
}
```
